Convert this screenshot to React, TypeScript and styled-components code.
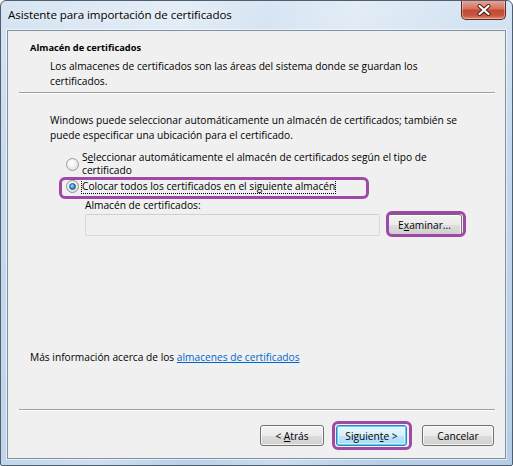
import React from "react";
import styled, { createGlobalStyle, css } from "styled-components";

const GlobalStyle = createGlobalStyle`
  html, body {
    margin: 0;
    padding: 0;
    background: #ffffff;
  }
  body {
    font-family: "Open Sans", "Noto Sans", "Liberation Sans", sans-serif;
    font-size: 10.2px;
    color: #000;
  }
`;

const Window = styled.div`
  width: 513px;
  height: 466px;
  box-sizing: border-box;
  display: flex;
  flex-direction: column;
  border: 1px solid #4f5f70;
  border-radius: 6px 6px 2px 2px;
  background:
    linear-gradient(100deg, rgba(255,255,255,0.0) 0%, rgba(255,255,255,0.35) 30%, rgba(255,255,255,0.05) 45%, rgba(255,255,255,0.3) 60%, rgba(255,255,255,0.0) 80%),
    linear-gradient(180deg, #d7e5f3 0%, #c6d9ed 30%, #bcd2ea 70%, #b6cde6 100%);
  overflow: hidden;
`;

const TitleBar = styled.div`
  height: 29px;
  display: flex;
  align-items: flex-start;
  padding-left: 7px;
  flex-shrink: 0;
`;

const Title = styled.span`
  margin-top: 6px;
  font-size: 11.6px;
  color: #000;
  letter-spacing: -0.1px;
  text-shadow: 0 0 6px rgba(255, 255, 255, 0.9);
`;

const CloseButton = styled.div`
  margin-left: auto;
  margin-right: 6px;
  margin-top: -1px;
  width: 45px;
  height: 20px;
  box-sizing: border-box;
  border: 1px solid #5a2a26;
  border-top: none;
  border-radius: 0 0 5px 5px;
  background: linear-gradient(180deg, #e9a99c 0%, #d5735f 45%, #c24a34 55%, #c8543c 80%, #dd8a6c 100%);
  box-shadow: inset 0 0 0 1px rgba(255, 255, 255, 0.35);
  display: flex;
  align-items: center;
  justify-content: center;
`;

const Client = styled.div`
  flex: 1;
  margin: 0 6px 6px 6px;
  border: 1px solid #7f8fa3;
  background: #f0f0f0;
  display: flex;
  flex-direction: column;
  box-shadow: 0 0 0 1px rgba(255, 255, 255, 0.6);
`;

const Header = styled.div`
  padding: 9px 0 0 22px;
`;

const HeaderTitle = styled.div`
  font-weight: 700;
  font-size: 9.3px;
  line-height: 15px;
`;

const HeaderText = styled.p`
  margin: 4px 0 0 20px;
  line-height: 15px;
  width: 400px;
`;

const Separator = styled.hr<{ $top: number }>`
  margin: ${(p) => p.$top}px 10px 0 11px;
  border: none;
  border-top: 1px solid #a0a0a0;
  border-bottom: 1px solid #ffffff;
  height: 0;
`;

const Body = styled.div`
  flex: 1;
  padding: 19px 0 0 42px;
  display: flex;
  flex-direction: column;
`;

const Paragraph = styled.p`
  margin: 0;
  line-height: 15px;
  width: 420px;
`;

const Options = styled.div`
  margin: 8px 0 0 16px;
  display: flex;
  flex-direction: column;
  align-items: flex-start;
  gap: 3px;
`;

const OptionRow = styled.label<{ $width?: number }>`
  position: relative;
  display: flex;
  align-items: center;
  gap: 3px;
  line-height: 13px;
  width: ${(p) => (p.$width ? `${p.$width}px` : "auto")};
`;

const Highlight = styled.span<{ $t: number; $r: number; $b: number; $l: number; $radius?: number }>`
  position: absolute;
  top: ${(p) => p.$t}px;
  right: ${(p) => p.$r}px;
  bottom: ${(p) => p.$b}px;
  left: ${(p) => p.$l}px;
  border: 3px solid #a048a8;
  border-radius: ${(p) => p.$radius ?? 6}px;
  pointer-events: none;
`;

const Radio = styled.span<{ $checked?: boolean }>`
  flex-shrink: 0;
  width: 13px;
  height: 13px;
  box-sizing: border-box;
  border-radius: 50%;
  border: 1px solid #9a9b9b;
  background: radial-gradient(circle at 40% 35%, #ffffff 0%, #f2f2f2 40%, #d4d4d4 100%);
  display: flex;
  align-items: center;
  justify-content: center;
  ${(p) =>
    p.$checked &&
    css`
      border-color: #8e8f8f;
      &::after {
        content: "";
        width: 5px;
        height: 5px;
        border-radius: 50%;
        border: 1px solid #1f4f7a;
        background: radial-gradient(circle at 40% 35%, #a8dcf8 0%, #3b8ed0 55%, #155a98 100%);
      }
    `}
`;

const OptionText = styled.span<{ $focus?: boolean }>`
  ${(p) =>
    p.$focus &&
    css`
      outline: 1px dotted #000;
      outline-offset: 0;
    `}
`;

const StoreBlock = styled.div`
  margin: 5px 0 0 35px;
  display: flex;
  flex-direction: column;
  gap: 2px;
`;

const StoreLabel = styled.div`
  line-height: 14px;
`;

const StoreRow = styled.div`
  display: flex;
  align-items: center;
  gap: 7px;
`;

const TextField = styled.div`
  width: 295px;
  height: 22px;
  box-sizing: border-box;
  border: 1px solid #d9d9d9;
  border-top-color: #cfcfcf;
  border-radius: 2px;
  background: #f0f0f0;
`;

const ButtonWrap = styled.span<{ $gap?: number }>`
  position: relative;
  display: inline-flex;
  margin-left: ${(p) => p.$gap ?? 0}px;
`;

const Button = styled.button<{ $primary?: boolean; $width: number; $height?: number }>`
  width: ${(p) => p.$width}px;
  height: ${(p) => p.$height ?? 21}px;
  padding: 0;
  box-sizing: border-box;
  font-family: inherit;
  font-size: 10.2px;
  color: #000;
  border: 1px solid #707070;
  border-radius: 3px;
  background: linear-gradient(180deg, #f2f2f2 0%, #ebebeb 50%, #dddddd 51%, #cfcfcf 100%);
  box-shadow: inset 0 0 0 1px rgba(255, 255, 255, 0.75);
  text-align: center;
  ${(p) =>
    p.$primary &&
    css`
      border-color: #3c7fb1;
      background: linear-gradient(180deg, #eaf6fd 0%, #d9f0fc 50%, #bee6fd 51%, #a7d9f5 100%);
      box-shadow: inset 0 0 0 1px #48d8fb, inset 0 0 0 2px rgba(255, 255, 255, 0.5);
    `}
  u {
    text-decoration: underline;
    text-underline-offset: 1px;
  }
`;

const MoreInfo = styled.div`
  margin: auto 0 0 -20px;
  padding-bottom: 44px;
  line-height: 15px;
`;

const Link = styled.a`
  color: #0066cc;
  text-decoration: underline;
  cursor: pointer;
`;

const Footer = styled.div`
  display: flex;
  justify-content: flex-end;
  align-items: center;
  padding: 14px 11px 12px 0;
`;

const CloseGlyph = () => (
  <svg width="16" height="12" viewBox="0 0 16 12">
    <path
      d="M3.5 2 L12.5 10 M12.5 2 L3.5 10"
      stroke="#4a1a14"
      strokeWidth="4"
      strokeLinecap="round"
    />
    <path
      d="M3.5 2 L12.5 10 M12.5 2 L3.5 10"
      stroke="#ffffff"
      strokeWidth="2.2"
      strokeLinecap="round"
    />
  </svg>
);

export default function App() {
  return (
    <>
      <GlobalStyle />
      <Window>
        <TitleBar>
          <Title>Asistente para importación de certificados</Title>
          <CloseButton>
            <CloseGlyph />
          </CloseButton>
        </TitleBar>
        <Client>
          <Header>
            <HeaderTitle>Almacén de certificados</HeaderTitle>
            <HeaderText>
              Los almacenes de certificados son las áreas del sistema donde se guardan los certificados.
            </HeaderText>
          </Header>
          <Separator $top={3} />
          <Body>
            <Paragraph>
              Windows puede seleccionar automáticamente un almacén de certificados; también se
              puede especificar una ubicación para el certificado.
            </Paragraph>
            <Options>
              <OptionRow $width={370}>
                <Radio />
                <OptionText>
                  S<u>e</u>leccionar automáticamente el almacén de certificados según el tipo de
                  certificado
                </OptionText>
              </OptionRow>
              <OptionRow>
                <Highlight $t={-3} $r={-34} $b={-6} $l={-7} />
                <Radio $checked />
                <OptionText $focus>Colocar todos los certificados en el siguiente almacén</OptionText>
              </OptionRow>
            </Options>
            <StoreBlock>
              <StoreLabel>Almacén de certificados:</StoreLabel>
              <StoreRow>
                <TextField />
                <ButtonWrap>
                  <Highlight $t={-3} $r={-4} $b={-1} $l={-1} />
                  <Button $width={75} $height={22}>
                    <span>
                      E<u>x</u>aminar...
                    </span>
                  </Button>
                </ButtonWrap>
              </StoreRow>
            </StoreBlock>
            <MoreInfo>
              Más información acerca de los <Link>almacenes de certificados</Link>
            </MoreInfo>
          </Body>
          <Separator $top={0} />
          <Footer>
            <Button $width={64}>
              <span>
                &lt; <u>A</u>trás
              </span>
            </Button>
            <ButtonWrap $gap={12}>
              <Highlight $t={-4} $r={-5} $b={-4} $l={-4} />
              <Button $primary $width={71}>
                <span>
                  Siguien<u>t</u>e &gt;
                </span>
              </Button>
            </ButtonWrap>
            <ButtonWrap $gap={15}>
              <Button $width={72}>
                <span>Cancelar</span>
              </Button>
            </ButtonWrap>
          </Footer>
        </Client>
      </Window>
    </>
  );
}
